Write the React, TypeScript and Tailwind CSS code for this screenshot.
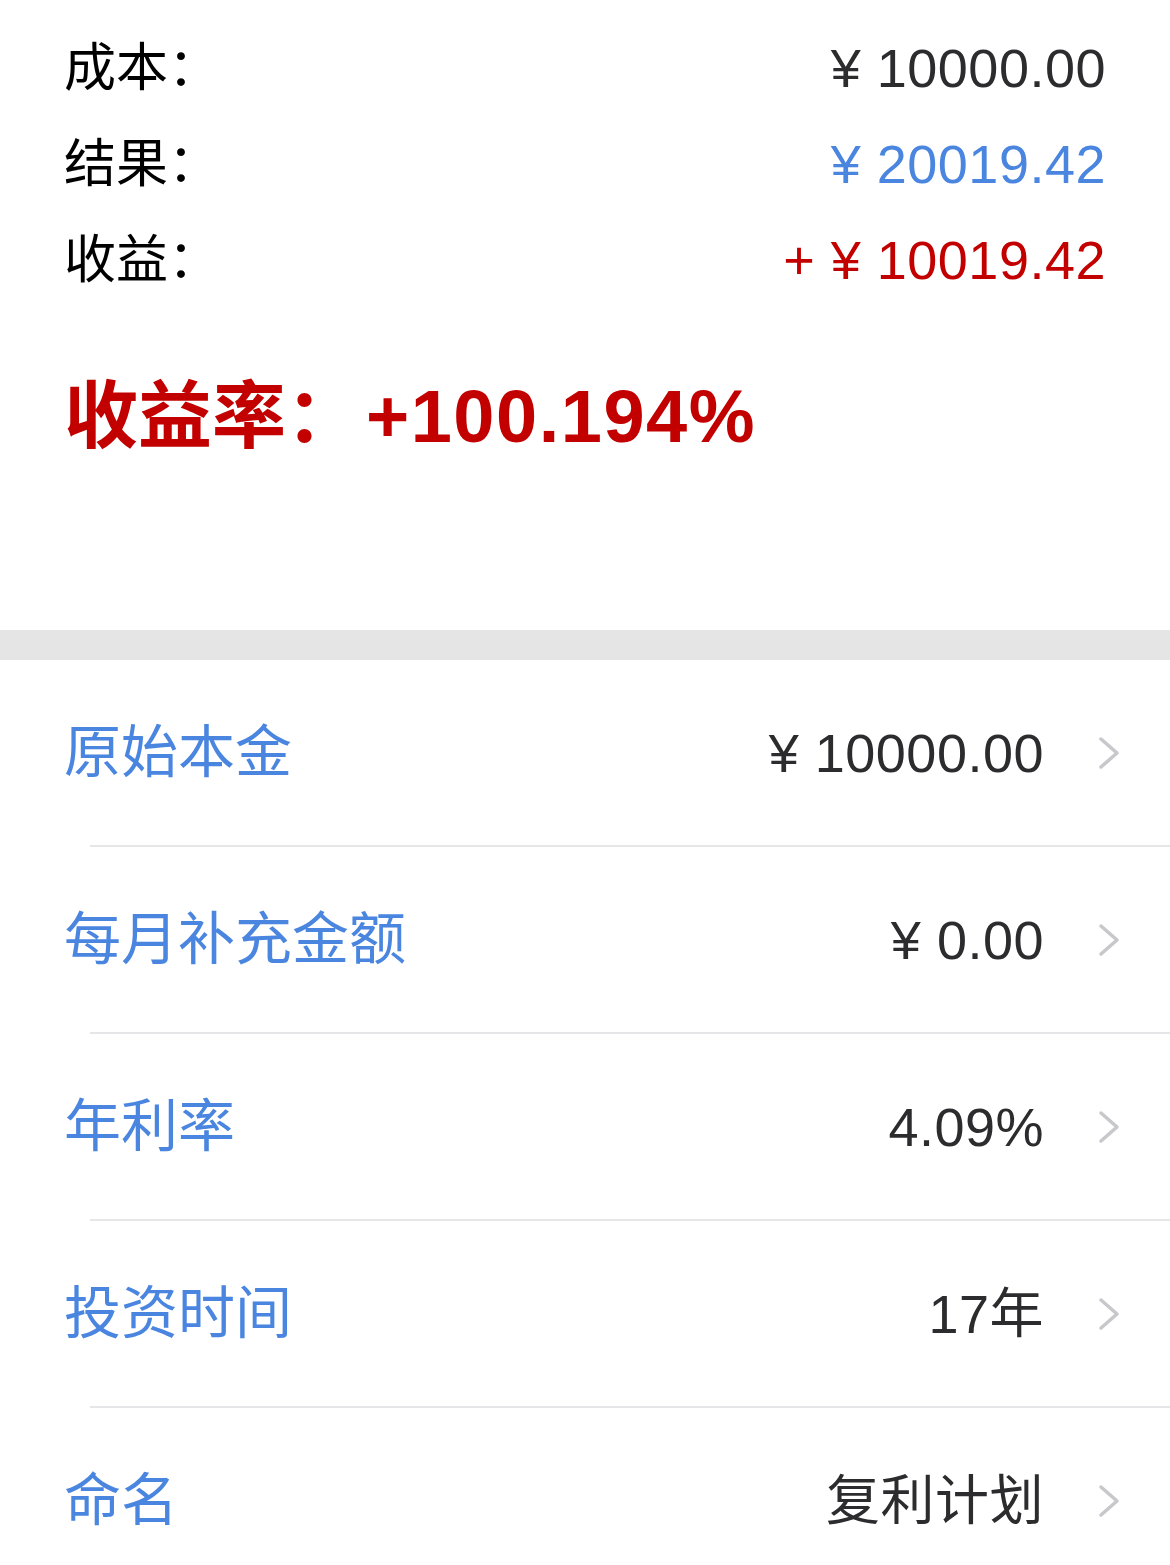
const font = { fontFamily: '"Liberation Sans", "Noto Sans CJK SC", sans-serif' };

type SummaryRow = { label: string; value: string; tone: string };

const summary: SummaryRow[] = [
  { label: '成本：', value: '¥ 10000.00', tone: 'text-[#2c2c2e]' },
  { label: '结果：', value: '¥ 20019.42', tone: 'text-[#4a86e0]' },
  { label: '收益：', value: '+ ¥ 10019.42', tone: 'text-[#c30000]' },
];

const settings = [
  { label: '原始本金', value: '¥ 10000.00' },
  { label: '每月补充金额', value: '¥ 0.00' },
  { label: '年利率', value: '4.09%' },
  { label: '投资时间', value: '17年' },
  { label: '命名', value: '复利计划' },
];

function Chevron() {
  return (
    <svg width="22" height="34" viewBox="0 0 22 34" fill="none" className="shrink-0">
      <path d="M3 3 L19 17 L3 31" stroke="#c7c7cc" strokeWidth="3.5" strokeLinecap="round" strokeLinejoin="round" />
    </svg>
  );
}

export default function App() {
  return (
    <div className="w-[1170px] h-[1565px] overflow-hidden bg-white" style={font}>
      <div className="pt-[20px] px-[64px]">
        {summary.map((row) => (
          <div key={row.label} className="h-[96px] flex items-center justify-between">
            <span className="text-[52px] leading-none text-black">{row.label}</span>
            <span className={`text-[54px] leading-none tracking-[0.5px] ${row.tone}`}>{row.value}</span>
          </div>
        ))}
        <div className="mt-[72px] text-[74px] leading-none font-bold text-[#c30000]">
          收益率：<span className="ml-[6px] tracking-[1.5px]">+100.194%</span>
        </div>
      </div>

      <div className="mt-[176px] h-[30px] bg-[#e5e5e5]" />

      <div>
        {settings.map((item, i) => (
          <div key={item.label}>
            {i > 0 && <div className="ml-[90px] h-[2px] bg-[#e6e6e8]" />}
            <div className="h-[185px] flex items-center pl-[64px] pr-[50px]">
              <span className="flex-1 text-[57px] leading-none text-[#4a86e0]">{item.label}</span>
              <span className="text-[54px] leading-none tracking-[0.5px] text-[#2c2c2e]">{item.value}</span>
              <span className="ml-[54px]">
                <Chevron />
              </span>
            </div>
          </div>
        ))}
      </div>
    </div>
  );
}
